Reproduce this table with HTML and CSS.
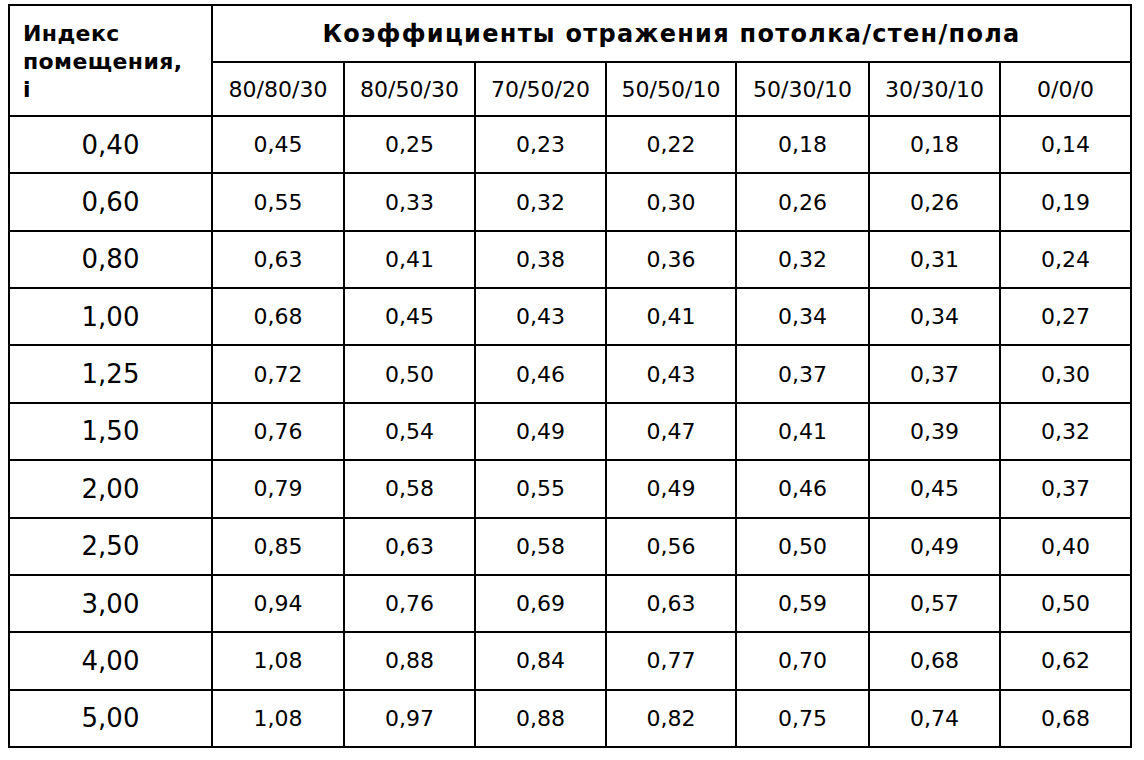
FILE: index.html
```html
<!DOCTYPE html>
<html lang="ru">
<head>
<meta charset="utf-8">
<title>Коэффициенты отражения</title>
<link rel="stylesheet" href="styles.css">
</head>
<body>
<table class="refl">
  <colgroup>
    <col class="c-idx">
    <col class="c-a"><col class="c-b"><col class="c-c"><col class="c-d"><col class="c-e"><col class="c-f"><col class="c-g">
  </colgroup>
  <thead>
    <tr class="h1">
      <th class="idx-head" rowspan="2">Индекс<br>помещения,<br>i</th>
      <th class="group-head" colspan="7">Коэффициенты отражения потолка/стен/пола</th>
    </tr>
    <tr class="h2">
      <th class="sub">80/80/30</th>
      <th class="sub">80/50/30</th>
      <th class="sub">70/50/20</th>
      <th class="sub">50/50/10</th>
      <th class="sub">50/30/10</th>
      <th class="sub">30/30/10</th>
      <th class="sub">0/0/0</th>
    </tr>
  </thead>
  <tbody>
    <tr><td class="idx">0,40</td><td>0,45</td><td>0,25</td><td>0,23</td><td>0,22</td><td>0,18</td><td>0,18</td><td>0,14</td></tr>
    <tr><td class="idx">0,60</td><td>0,55</td><td>0,33</td><td>0,32</td><td>0,30</td><td>0,26</td><td>0,26</td><td>0,19</td></tr>
    <tr><td class="idx">0,80</td><td>0,63</td><td>0,41</td><td>0,38</td><td>0,36</td><td>0,32</td><td>0,31</td><td>0,24</td></tr>
    <tr><td class="idx">1,00</td><td>0,68</td><td>0,45</td><td>0,43</td><td>0,41</td><td>0,34</td><td>0,34</td><td>0,27</td></tr>
    <tr><td class="idx">1,25</td><td>0,72</td><td>0,50</td><td>0,46</td><td>0,43</td><td>0,37</td><td>0,37</td><td>0,30</td></tr>
    <tr><td class="idx">1,50</td><td>0,76</td><td>0,54</td><td>0,49</td><td>0,47</td><td>0,41</td><td>0,39</td><td>0,32</td></tr>
    <tr><td class="idx">2,00</td><td>0,79</td><td>0,58</td><td>0,55</td><td>0,49</td><td>0,46</td><td>0,45</td><td>0,37</td></tr>
    <tr><td class="idx">2,50</td><td>0,85</td><td>0,63</td><td>0,58</td><td>0,56</td><td>0,50</td><td>0,49</td><td>0,40</td></tr>
    <tr><td class="idx">3,00</td><td>0,94</td><td>0,76</td><td>0,69</td><td>0,63</td><td>0,59</td><td>0,57</td><td>0,50</td></tr>
    <tr><td class="idx">4,00</td><td>1,08</td><td>0,88</td><td>0,84</td><td>0,77</td><td>0,70</td><td>0,68</td><td>0,62</td></tr>
    <tr><td class="idx">5,00</td><td>1,08</td><td>0,97</td><td>0,88</td><td>0,82</td><td>0,75</td><td>0,74</td><td>0,68</td></tr>
  </tbody>
</table>
</body>
</html>
```
FILE: styles.css
```css
html, body {
  margin: 0;
  padding: 0;
  background: #ffffff;
}

body {
  font-family: "DejaVu Sans", Verdana, sans-serif;
  color: #000000;
}

.refl {
  margin: 4px 0 0 8px;
  border-collapse: separate;
  border-spacing: 0;
  table-layout: fixed;
  width: 1124px;
  border-top: 2px solid #000;
  border-left: 2px solid #000;
}

.refl th,
.refl td {
  border-right: 2px solid #000;
  border-bottom: 2px solid #000;
  padding: 0;
  vertical-align: middle;
  text-align: center;
  box-sizing: border-box;
}

.c-idx { width: 203px; }
.c-a { width: 132px; }
.c-b { width: 131px; }
.c-c { width: 131px; }
.c-d { width: 130px; }
.c-e { width: 133px; }
.c-f { width: 131px; }
.c-g { width: 131px; }

.refl .h1 { height: 57px; }
.refl .h2 { height: 54px; }

.refl .idx-head {
  text-align: left;
  font-weight: bold;
  font-size: 22px;
  line-height: 28px;
  letter-spacing: 0.4px;
  padding: 3px 0 0 13px;
}

.refl .group-head {
  font-weight: bold;
  font-size: 24px;
  letter-spacing: 1.3px;
}

.refl .sub {
  font-weight: normal;
  font-size: 22px;
}

.refl tbody tr { height: 57.36px; }

.refl td {
  font-size: 22px;
}

.refl td.idx {
  font-size: 26px;
}
```
